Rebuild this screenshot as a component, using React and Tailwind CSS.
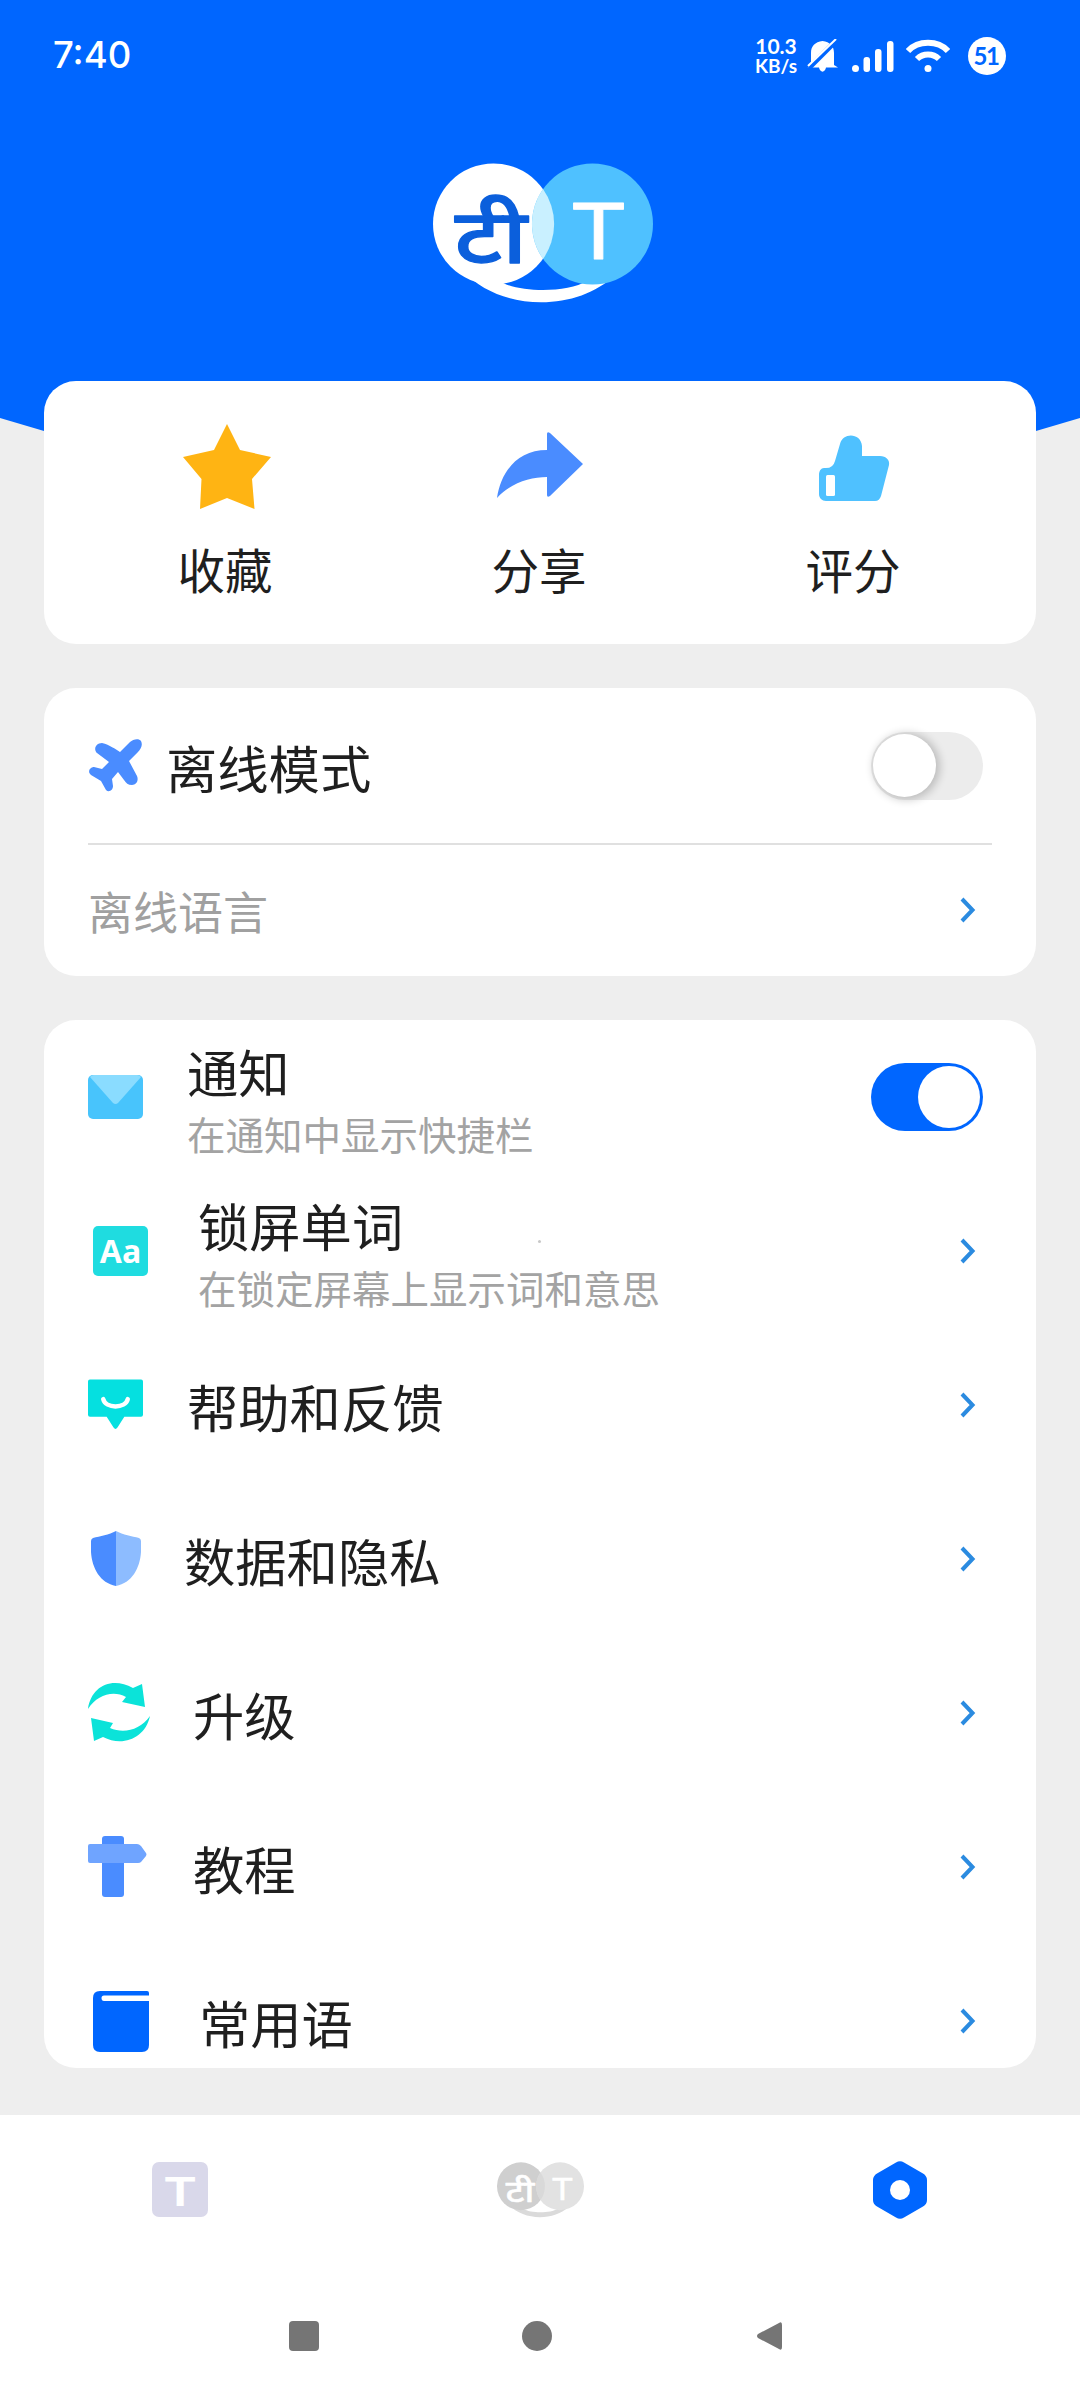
import React, { useState } from 'react';

function BrandMark({ className, left, right, overlap, arc, leftText, rightText }) {
  return (
    <svg className={className} viewBox="0 0 220 141">
      <path d="M30 108 C68 149 144 149 182 112 L154 118 C134 130 86 130 66 118 Z" fill={arc} />
      <circle cx="60.5" cy="61" r="60.5" fill={left} />
      <circle cx="159.5" cy="61" r="60.5" fill={right} />
      <path d="M110 26 A60.500 60.500 0 0 1 110 96 A60.500 60.500 0 0 1 110 26 Z" fill={overlap} />
      <text
        transform="translate(58 100) scale(1.05 0.86)"
        textAnchor="middle"
        fontSize="88"
        fontWeight="500"
        fontFamily="Noto Sans"
        fill={leftText}
        stroke={leftText}
        strokeWidth="1.5"
        strokeLinejoin="round"
      >
        टी
      </text>
      <text
        transform="translate(165.5 96) scale(1.14 1)"
        textAnchor="middle"
        fontSize="78"
        fontFamily="Lato"
        fill={rightText}
        stroke={rightText}
        strokeWidth="0.8"
        strokeLinejoin="round"
      >
        T
      </text>
    </svg>
  );
}

function StatusBar() {
  return (
    <div className="flex h-[112px] items-center justify-between pl-[53px] pr-[74px] text-white">
      <span className="-mt-[2px] text-[36.500px] font-medium leading-none">7:40</span>
      <div className="flex items-center">
        <div className="w-[44px] text-center font-['Lato'] font-bold">
          <div className="text-[21px] leading-[20px]">10.3</div>
          <div className="text-[19px] leading-[20px]">KB/s</div>
        </div>
        <svg className="ml-[8px] h-[34px] w-[33px]" viewBox="0 0 33 34">
          <path d="M5 28 V14 C5 7 9 3 16.500 2 C24 3 28 7 28 14 V26 L32 28.500 H20 C19 34 14 34 13 28.500 H1 Z" fill="#fff" />
          <path d="M3 29 L31 1" stroke="#0066ff" strokeWidth="5" />
          <path d="M2 27 L30 0" stroke="#fff" strokeWidth="2" />
        </svg>
        <svg className="ml-[13px] h-[33px] w-[42px]" viewBox="0 0 42 33" fill="#fff">
          <circle cx="3.500" cy="28.500" r="3.500" />
          <rect x="11.500" y="17" width="6.500" height="15" rx="3" />
          <rect x="23" y="9" width="6.500" height="23" rx="3" />
          <rect x="35" y="1" width="6.500" height="31" rx="3" />
        </svg>
        <svg className="ml-[12px] h-[34px] w-[44px]" viewBox="0 0 44 34" fill="none" stroke="#fff" strokeWidth="6">
          <path d="M2 12 C12 1 32 1 42 12" />
          <path d="M11 20 C17 14 27 14 33 20" />
          <circle cx="22" cy="29.500" r="3.500" fill="#fff" stroke="none" />
        </svg>
        <div className="ml-[18px] flex h-[38px] w-[38px] items-center justify-center rounded-full bg-white pr-[2px] font-['Lato'] text-[24px] font-bold leading-none tracking-[-1.5px] text-[#0066ff]">
          51
        </div>
      </div>
    </div>
  );
}

function Toggle({ on, onChange }) {
  return (
    <button
      type="button"
      role="switch"
      aria-checked={on}
      onClick={() => onChange(!on)}
      className={
        on
          ? 'flex h-[68px] w-[112px] items-center justify-end rounded-full bg-[#0066ff] px-[3px]'
          : 'flex h-[68px] w-[112px] items-center justify-start rounded-full bg-[#ececec] px-[2px]'
      }
    >
      <span
        className={
          on
            ? 'h-[62px] w-[62px] rounded-full bg-white'
            : 'h-[63px] w-[63px] rounded-full bg-white shadow-[2px_1px_9px_2px_rgba(0,0,0,0.2)]'
        }
      />
    </button>
  );
}

function Chevron() {
  return (
    <svg className="mr-[7px] h-[26px] w-[16px]" viewBox="0 0 16 26" fill="none" stroke="#2b8be0" strokeWidth="4">
      <path d="M2 2 L12.500 13 L2 24" />
    </svg>
  );
}

function StarIcon() {
  return (
    <svg className="ml-[1px] h-[86px] w-[88px]" viewBox="0 0 88 86">
      <path d="M44 1 L57 27 L88 34 L69 56 L71.500 86 L44 75 L17 86 L18.500 56 L0 34 L31 27 Z" fill="#ffb413" />
    </svg>
  );
}

function ShareIcon() {
  return (
    <svg className="h-[86px] w-[88px]" viewBox="0 0 88 86">
      <path d="M51 11 Q51 8 54 10 L87 41 L54 73 Q51 75 51 72 V54 C34 54 15 60 1 75 C5 48 22 27 51 27 Z" fill="#4a8cff" />
    </svg>
  );
}

function ThumbIcon() {
  return (
    <svg className="h-[86px] w-[88px]" viewBox="0 0 88 86">
      <path
        d="M14 45 Q23 46 25 38 L30 21 C33 9 51 10 52 23 V33 H70 C76 33 80 37 79 42 L71 73 C70 76 68 78 65 78 H16 C12 78 9 75 9 71 V52 C9 48 11 45 14 45 Z"
        fill="#4fc1ff"
      />
      <rect x="16" y="52" width="9" height="21" rx="1.500" fill="#fff" />
    </svg>
  );
}

function PlaneIcon() {
  return (
    <svg className="h-[56px] w-[56px]" viewBox="0 0 56 56">
      <path
        d="M32 14 L42 4 C45 1 51 0 53 3 C55 7 53 11 50 14 L41 23 L49 38 C51 43 48 47 44 47 C40 47 38 45 36 42 L30 34 L24 41 L25 48 C25 52 21 55 18 52 L13 43 L3 37 C-1 34 2 29 6 29 L14 31 L21 24 L9 15 C5 11 8 5 14 5 C22 7 27 11 32 14 Z"
        fill="#4a8cff"
      />
    </svg>
  );
}

function MailIcon() {
  return (
    <svg className="h-[44px] w-[55px]" viewBox="0 0 55 44">
      <rect width="55" height="44" rx="5" fill="#48c4fc" />
      <path d="M2 2 Q3 0 6 0 H49 Q52 0 53 2 L30 28 Q27.500 30 25 28 Z" fill="#8adcff" />
    </svg>
  );
}

function WordIcon() {
  return (
    <div className="flex h-[50px] w-[55px] items-center justify-center rounded-[5px] bg-[#1fdce0] font-['Open_Sans'] text-[32px] font-bold leading-none text-white">
      Aa
    </div>
  );
}

function FeedbackIcon() {
  return (
    <svg className="h-[51px] w-[55px]" viewBox="0 0 56 51">
      <path d="M2 0 H54 Q56 0 56 2 V36 Q56 38 54 38 H37 L30 49 Q28 52 26 49 L19 38 H2 Q0 38 0 36 V2 Q0 0 2 0 Z" fill="#05e0e0" />
      <path d="M15.500 20 C18 30 38 30 40.500 20" fill="none" stroke="#fff" strokeWidth="4.500" strokeLinecap="round" />
    </svg>
  );
}

function ShieldIcon() {
  return (
    <svg className="h-[55px] w-[50px]" viewBox="0 0 50 55">
      <path d="M25 0 C18 4 9 5 2 7 Q0 8 0 10 V21 C1 37 9 52 25 55 Z" fill="#4a8cff" />
      <path d="M25 0 C32 4 41 5 48 7 Q50 8 50 10 V21 C49 37 41 52 25 55 Z" fill="#8dbcff" />
    </svg>
  );
}

function UpgradeIcon() {
  return (
    <svg className="h-[60px] w-[62px]" viewBox="0 0 62 60" fill="#0be3d9">
      <path d="M0 27 C3 4 24 -6 45 6 L54 2 L57 25 L34 20 L38 15 C25 8 9 13 0 27 Z" />
      <path d="M62 34 C57 57 34 65 15 55 L6 59 L3 36 L25 41 L22 46 C36 52 52 48 62 34 Z" />
    </svg>
  );
}

function GuideIcon() {
  return (
    <svg className="h-[61px] w-[60px]" viewBox="0 0 60 61">
      <rect x="14" width="22" height="61" rx="3" fill="#4a8cff" />
      <path d="M2 8 H49 Q51 8 53 10 L58 17 Q59 18 58 20 L53 26 Q52 27 50 27 H2 Q0 27 0 25 V10 Q0 8 2 8 Z" fill="#6fa4ff" />
    </svg>
  );
}

function BookIcon() {
  return (
    <svg className="h-[61px] w-[56px]" viewBox="0 0 56 61">
      <path d="M7 0 H54 Q56 0 56 2 V4.500 H11 Q8.500 4.500 8.500 7 Q8.500 10 11 10 H56 V54 Q56 61 49 61 H7 Q0 61 0 54 V7 Q0 0 7 0 Z" fill="#0066ff" />
    </svg>
  );
}

const actions = [
  { label: '收藏', icon: <StarIcon /> },
  { label: '分享', icon: <ShareIcon /> },
  { label: '评分', icon: <ThumbIcon /> },
];

const rows = [
  { title: '帮助和反馈', icon: <FeedbackIcon />, iconBox: 'flex w-[99px] pb-[1px]' },
  { title: '数据和隐私', icon: <ShieldIcon />, iconBox: 'flex w-[96px] pl-[3px] pb-[1px]' },
  { title: '升级', icon: <UpgradeIcon />, iconBox: 'flex w-[105px] pb-[2px]' },
  { title: '教程', icon: <GuideIcon />, iconBox: 'flex w-[105px] pb-[1px]' },
  { title: '常用语', icon: <BookIcon />, iconBox: 'flex w-[111px] pl-[5px]' },
];

function App() {
  const [offline, setOffline] = useState(false);
  const [notify, setNotify] = useState(true);

  return (
    <div className="relative flex h-[2400px] w-[1080px] flex-col overflow-hidden bg-[#eeeeee] font-['Inter','Noto_Sans_CJK_SC',sans-serif] text-[#1f1f1f]">
      {/* Blue backdrop with slanted bottom corners */}
      <div className="absolute inset-x-0 top-0 h-[431px] bg-[#0066ff] [clip-path:polygon(0_0,100%_0,100%_418px,1036px_431px,44px_431px,0_418px)]"></div>

      <div className="relative flex h-[2115px] flex-col">
        <StatusBar />

        <div className="flex h-[269px] justify-center pt-[51px] pl-[6px]">
          <BrandMark
            className="h-[141px] w-[220px]"
            left="#fff"
            right="#4fc1ff"
            overlap="#c9f0ff"
            arc="#fff"
            leftText="#0b5fdc"
            rightText="#fff"
          />
        </div>

        {/* Quick actions */}
        <div className="mx-[44px] flex h-[263px] shrink-0 justify-center rounded-[32px] bg-white pt-[42px]">
          {actions.map((item) => (
            <button key={item.label} type="button" className="flex w-[314px] flex-col items-center">
              {item.icon}
              <span className="mt-[28px] mr-[2px] text-[47.500px] leading-[70px]">{item.label}</span>
            </button>
          ))}
        </div>

        {/* Offline */}
        <div className="mx-[44px] mt-[44px] h-[288px] shrink-0 rounded-[32px] bg-white px-[44px]">
          <div className="flex h-[155px] items-center">
            <PlaneIcon />
            <span className="ml-[22px] flex-1 pt-[9px] text-[51.300px] leading-[76px]">离线模式</span>
            <div className="mr-[9px]">
              <Toggle on={offline} onChange={setOffline} />
            </div>
          </div>
          <div className="h-[2px] bg-[#e0e0e0]"></div>
          <div className="flex h-[130px] items-center justify-between pr-[9px]">
            <span className="pt-[7px] text-[45px] leading-[66px] text-[#a0a0a0]">离线语言</span>
            <Chevron />
          </div>
        </div>

        {/* Settings list, last row runs under the card edge */}
        <div className="mx-[44px] mt-[44px] h-[1048px] shrink-0 overflow-hidden rounded-[32px] bg-white px-[44px]">
          <div className="flex h-[154px] items-center">
            <div className="w-[99px]">
              <MailIcon />
            </div>
            <div className="flex-1 pt-[6px]">
              <div className="pt-[2px] text-[51.300px] leading-[70px]">通知</div>
              <div className="text-[38.500px] leading-[54px] text-[#a3a3a3]">在通知中显示快捷栏</div>
            </div>
            <div className="mr-[9px]">
              <Toggle on={notify} onChange={setNotify} />
            </div>
          </div>

          <div className="flex h-[154px] items-center pr-[9px]">
            <div className="w-[110px] pl-[5px]">
              <WordIcon />
            </div>
            <div className="flex-1 pt-[6px]">
              <div className="flex items-center pt-[2px] text-[51.300px] leading-[70px]">
                锁屏单词
                <span className="ml-[135px] mt-[26px] h-[3px] w-[3px] rounded-full bg-[#c8c8c8]"></span>
              </div>
              <div className="text-[38.500px] leading-[54px] text-[#a3a3a3]">在锁定屏幕上显示词和意思</div>
            </div>
            <Chevron />
          </div>

          {rows.map((row) => (
            <div key={row.title} className="flex h-[154px] items-center pr-[9px]">
              <div className={row.iconBox}>{row.icon}</div>
              <span className="flex-1 pt-[7px] text-[51.300px] leading-[76px]">{row.title}</span>
              <Chevron />
            </div>
          ))}
        </div>
      </div>

      {/* Tab bar */}
      <div className="relative grid h-[150px] grid-cols-3 items-center justify-items-center bg-white">
        <svg className="h-[56px] w-[56px]" viewBox="0 0 56 56">
          <rect width="56" height="55" rx="7" fill="#d9d8ea" />
          <text transform="translate(28 44) scale(1.3 1)" textAnchor="middle" fontSize="40" fontWeight="700" fontFamily="Lato" fill="#fff">T</text>
        </svg>
        <BrandMark
          className="h-[56px] w-[87px]"
          left="#cfcfcf"
          right="#e2e2e2"
          overlap="#d9d9d9"
          arc="#dadada"
          leftText="#fff"
          rightText="#fff"
        />
        <svg className="h-[58px] w-[56px]" viewBox="0 0 56 58">
          <path d="M24 1.500 Q28 -1 32 1.500 L51 12.500 Q55 15 55 19 V39 Q55 43 51 45.500 L32 56.500 Q28 59 24 56.500 L5 45.500 Q1 43 1 39 V19 Q1 15 5 12.500 Z" fill="#0066ff" />
          <circle cx="28" cy="29" r="10" fill="#fff" />
        </svg>
      </div>

      {/* System navigation */}
      <div className="relative flex h-[135px] items-center bg-white pl-[289px]">
        <div className="mt-[6px] h-[30px] w-[30px] rounded-[4px] bg-[#757575]"></div>
        <div className="ml-[203px] mt-[6px] h-[30px] w-[30px] rounded-full bg-[#757575]"></div>
        <svg className="ml-[205px] mt-[6px] h-[28px] w-[26px]" viewBox="0 0 26 28">
          <path d="M22 1 Q25 -1 25 3 V25 Q25 29 22 27 L1 16 Q-1 14 1 12 Z" fill="#757575" />
        </svg>
      </div>
    </div>
  );
}

export default App;
